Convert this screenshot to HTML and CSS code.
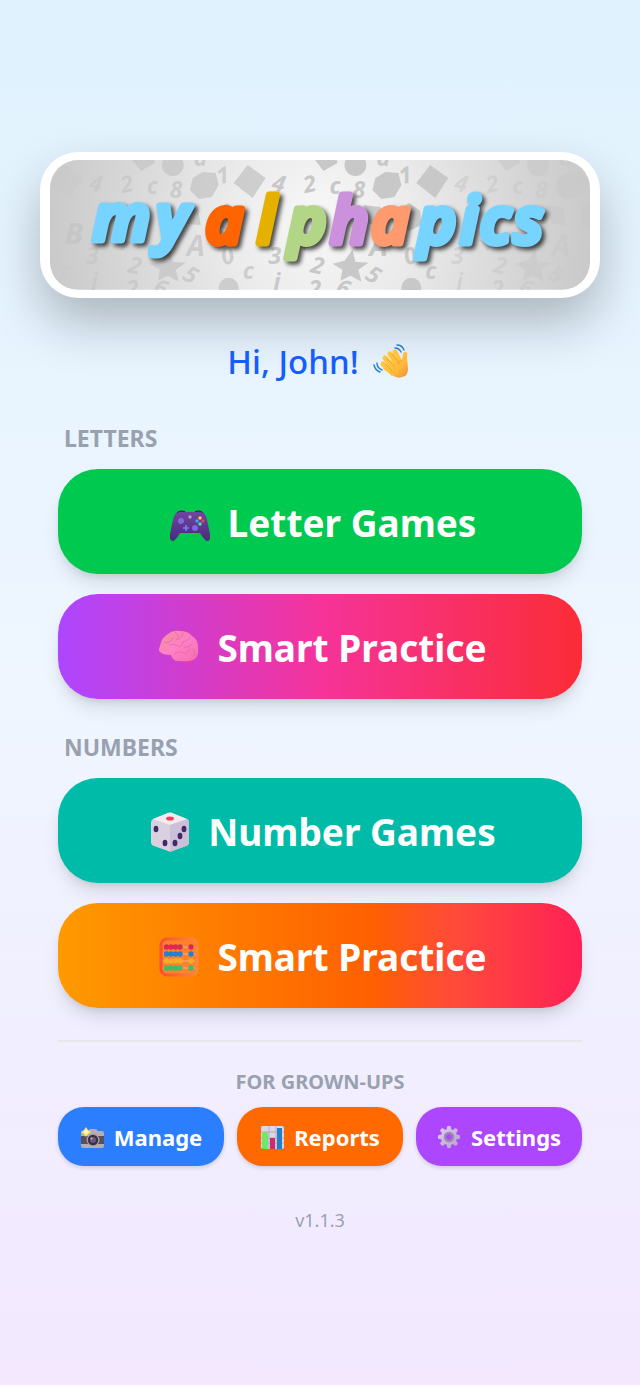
FILE: index.html
```html
<!DOCTYPE html>
<html lang="en">
<head>
<meta charset="utf-8">
<meta name="viewport" content="width=device-width, initial-scale=1">
<title>my alphapics</title>
<link rel="stylesheet" href="styles.css">
</head>
<body>
<main class="home">
  <div class="logo">
    <svg class="logo-art" viewBox="0 0 541 130" role="img" aria-label="my alphapics">
      <defs>
        <radialGradient id="logoBg" cx="270" cy="60" r="270" gradientUnits="userSpaceOnUse">
          <stop offset="0" stop-color="#f8f8f8"/><stop offset=".35" stop-color="#ebebeb"/><stop offset=".75" stop-color="#d6d6d6"/><stop offset="1" stop-color="#cacaca"/>
        </radialGradient>
        <g id="tile" fill="#c8c8c8" class="doodle">
          <path d="M78-6 91 11 105 3 103-6Z"/><circle cx="123" cy="5" r="11"/>
          <path d="m153 12 13 1 3 12-7 12-13 2-9-9 3-12Z"/><path d="m198 5 18 13-13 20-19-15Z"/>
          <path d="m131 45 17 2 3 18-14-1Z"/><path d="m166 50 11-7 11 8 1 14-12 6-11-7Z"/><path d="m64 80 18 2-10 9Z"/>
          <path d="m120 90 3 12 13 1-10 7 3 12-11-6-10 5 2-11-10-6 12-3Z"/>
          <circle cx="179" cy="128" r="10"/>
          <text x="40" y="32" transform="rotate(12 48 23)">4</text><text x="70" y="32" transform="rotate(-12 78 21)">2</text>
          <text x="97" y="34">c</text><text x="120" y="38">8</text><text x="166" y="23" transform="rotate(-12 174 12)">1</text>
          <text x="144" y="6">a</text><text x="137" y="96" class="doodle-big">A</text><text x="171" y="104" transform="rotate(-18 178 94)">0</text>
          <text x="36" y="104">3</text><text x="79" y="114" transform="rotate(12 87 105)">2</text>
          <text x="135" y="124" transform="rotate(30 143 115)">5</text><text x="193" y="119">c</text><text x="41" y="130">i</text>
          <text x="105" y="137" transform="rotate(20 113 127)">6</text><text x="76" y="137">2</text>
        </g>
      </defs>
      <rect width="541" height="130" fill="url(#logoBg)"/>
      <g opacity=".4"><use href="#tile" x="-183"/></g>
      <g opacity=".85"><use href="#tile"/></g>
      <use href="#tile" x="183"/>
      <g opacity=".6"><use href="#tile" x="366"/></g>
      <text x="15" y="84" class="doodle doodle-big" fill="#c6c6c6">B</text>
      <g class="wordmark">
        <text y="80" class="sky"><tspan x="43">m</tspan><tspan x="107">y</tspan></text>
        <text y="83"><tspan x="156" class="orange">a</tspan><tspan x="208" class="gold">l</tspan><tspan x="239" class="green">p</tspan><tspan x="281" class="violet">h</tspan><tspan x="322" class="peach">a</tspan><tspan x="369" class="sky">p</tspan><tspan x="411" class="sky">i</tspan><tspan x="431" class="sky">c</tspan><tspan x="465" class="sky">s</tspan></text>
      </g>
    </svg>
  </div>

  <h1 class="greeting">Hi, John!
    <svg class="wave" viewBox="0 0 36 36" aria-hidden="true">
      <defs><linearGradient id="skin" x1="0" y1="0" x2="1" y2="1"><stop stop-color="#ffcf3f"/><stop offset=".65" stop-color="#ffb83a"/><stop offset="1" stop-color="#ef8b3c"/></linearGradient></defs>
      <g stroke="#ffc43c" stroke-width="5" stroke-linecap="round"><path d="m17 10 9 12M12 14l9 10M10 20l9 9M22 8l6 12"/></g>
      <path fill="url(#skin)" d="M15 18 25 13l4 3 1-6q1-3 3-2 2 1 1 5l1 12q0 7-6 8-5 2-10-2l-9-6Z"/>
      <path fill="none" stroke="#e79b2e" stroke-width=".7" d="m19 10 7 9M14 15l8 8M12 20l7 7M29 16q-4 1-4 5"/>
      <path fill="none" stroke="#267fc5" stroke-width="1.4" stroke-linecap="round" d="M22 4q4 0 6 4M24 1q5 0 7 5M4 19q0 5 5 7M1 21q1 5 6 7"/>
    </svg>
  </h1>

  <section class="group">
    <h2 class="label">LETTERS</h2>
    <button class="big green-btn" type="button">
      <svg class="icon" viewBox="0 0 40 40" aria-hidden="true">
        <defs><linearGradient id="pad" x1="0" y1="0" x2="0" y2="1"><stop stop-color="#71459f"/><stop offset="1" stop-color="#482b7c"/></linearGradient></defs>
        <path fill="#34264d" d="M6 11q2-5 9-3v4H6ZM25 8q7-2 9 3v2h-9Z"/>
        <path fill="url(#pad)" d="M7 10q3-2 7-1h12q4-1 7 1 3 1 4 7l3 14q1 7-3 7-2 0-7-8H10q-5 8-7 8-4 0-3-7l3-14q1-6 4-7Z"/>
        <circle cx="11" cy="18" r="3" fill="#7d69dc"/><circle cx="25" cy="25" r="3" fill="#7d69dc"/><path d="M16 22v6m-3-3h6" stroke="#8a78f5" stroke-width="1.6"/><circle cx="20" cy="14" r="1.7" fill="#b7a0bd"/>
        <circle cx="30" cy="15" r="1.7" fill="#ffc85d"/><circle cx="33" cy="18" r="1.7" fill="#f43d5c"/><circle cx="30" cy="21" r="1.7" fill="#54dfac"/><circle cx="27" cy="18" r="1.7" fill="#38a9ef"/>
      </svg>
      <span>Letter Games</span>
    </button>
    <button class="big pink-btn" type="button">
      <svg class="icon" viewBox="0 0 40 40" aria-hidden="true">
        <defs><linearGradient id="brain" x1="0" y1="0" x2="1" y2="1"><stop stop-color="#f0949d"/><stop offset=".5" stop-color="#ff80c5"/><stop offset="1" stop-color="#f26fb0"/></linearGradient></defs>
        <path fill="#ec3d9c" d="m25 31 2 3q3 4 4 2l2-7Z"/>
        <path fill="url(#brain)" d="M1 18Q3 9 9 6q5-4 12-3 8 0 12 5 7 4 6 13 1 8-5 11-5 2-15 1-5 0-7-6-8 0-11-3-2-2 0-6Z"/>
        <path fill="none" stroke="#e868a8" stroke-width=".9" stroke-linecap="round" d="M5 14q5 3 9-4M16 4q4 2 3 6m5-5q-1 6-7 7m-6 5q5-2 9 2 4-1 4-5m7-5q-1 4-7 5m9 2q-3 4-8 3m-10 8q4-5 10-2 5 0 6-4m3 0q3 3 1 7"/>
      </svg>
      <span>Smart Practice</span>
    </button>
  </section>

  <section class="group">
    <h2 class="label">NUMBERS</h2>
    <button class="big teal-btn" type="button">
      <svg class="icon" viewBox="0 0 40 40" aria-hidden="true">
        <path d="M3 7 18 1q2-1 4 0l15 6q2 1 2 4v19q0 3-3 4l-14 5q-2 1-4 0L4 34q-3-1-3-4V11q0-3 2-4Z" fill="#d9d1e0"/>
        <path d="m3 7 15-6q2-1 4 0l15 6-17 6Z" fill="#f1ebef"/><path d="m20 13 18-6 1 4v19q0 3-3 4l-16 6Z" fill="#cbc0d7"/>
        <ellipse cx="20" cy="6.500" rx="4" ry="2" fill="#f0405f"/>
        <g fill="#402966"><ellipse cx="6" cy="17" rx="2.400" ry="3.200"/><ellipse cx="15" cy="31" rx="2.400" ry="3.200"/><ellipse cx="34" cy="17" rx="2.400" ry="3.200"/><ellipse cx="30" cy="24" rx="2.400" ry="3.200"/><ellipse cx="25" cy="31" rx="2.400" ry="3.200"/></g>
      </svg>
      <span>Number Games</span>
    </button>
    <button class="big orange-btn" type="button">
      <svg class="icon" viewBox="0 0 40 40" aria-hidden="true">
        <defs><linearGradient id="frame"><stop stop-color="#f75231"/><stop offset="1" stop-color="#ff873e"/></linearGradient></defs>
        <rect x="2" y="2" width="36" height="36" rx="6" fill="#ff8128" stroke="url(#frame)" stroke-width="3"/>
        <path stroke="#e8b3a0" stroke-width="1.200" d="M4 10h32M4 17h32M4 24h32M4 31h32"/>
        <g fill="#dc2855"><circle cx="7.500" cy="10" r="2.700"/><circle cx="12" cy="10" r="2.700"/><circle cx="16.500" cy="10" r="2.700"/><circle cx="21" cy="10" r="2.700"/><circle cx="32" cy="10" r="2.700"/></g>
        <g fill="#287fcd"><circle cx="7.500" cy="17" r="2.700"/><circle cx="12" cy="17" r="2.700"/><circle cx="16.500" cy="17" r="2.700"/><circle cx="21" cy="17" r="2.700"/><circle cx="32" cy="17" r="2.700"/></g>
        <g fill="#f8aa29"><circle cx="7.500" cy="24" r="2.700"/><circle cx="12" cy="24" r="2.700"/><circle cx="16.500" cy="24" r="2.700"/><circle cx="21" cy="24" r="2.700"/><circle cx="32" cy="24" r="2.700"/></g>
        <g fill="#3dbd66"><circle cx="7.500" cy="31" r="2.700"/><circle cx="12" cy="31" r="2.700"/><circle cx="16.500" cy="31" r="2.700"/><circle cx="21" cy="31" r="2.700"/><circle cx="32" cy="31" r="2.700"/></g>
      </svg>
      <span>Smart Practice</span>
    </button>
  </section>

  <section class="adults">
    <h2 class="label small-label">FOR GROWN-UPS</h2>
    <div class="tools">
      <button class="tool blue-btn" type="button">
        <svg class="tool-icon" viewBox="0 0 24 24" aria-hidden="true">
          <path fill="#b5adb5" d="M1 8q0-2 2-2h5l2-2h6l2 2h4q2 0 2 2v4H1Z"/><path fill="#57505a" d="M1 11h23v8H1Z"/><path fill="#b4abb3" d="M1 19h23v2q0 2-2 2H3q-2 0-2-2Z"/>
          <circle cx="13" cy="15" r="6.500" fill="#aaa0aa"/><circle cx="13" cy="15" r="5.200" fill="#392e46"/><circle cx="13" cy="15" r="3" fill="#6c5976"/><circle cx="11.500" cy="13.500" r="1" fill="#c9bbcf"/>
          <path fill="#ffe36b" d="m6 2 2 3 3 2-3 2-2 3-2-3-3-2 3-2Z"/><circle cx="6" cy="7" r="2" fill="#fff7bd"/>
        </svg>
        <span>Manage</span>
      </button>
      <button class="tool report-btn" type="button">
        <svg class="tool-icon" viewBox="0 0 24 24" aria-hidden="true">
          <rect x="1" y="1" width="23" height="23" rx="2" fill="#ded5e3"/><path d="M1 7h23M1 13h23M1 18h23M9 1v23M16 1v23" stroke="#b7aac3"/>
          <path fill="#72e56b" d="M2 7h6v17H2Z"/><path fill="#ce2b69" d="M10 13h5v11h-5Z"/><path fill="#247fc8" d="M17 3h5v21h-5Z"/>
        </svg>
        <span>Reports</span>
      </button>
      <button class="tool purple-btn" type="button">
        <svg class="tool-icon" viewBox="0 0 24 24" aria-hidden="true">
          <defs><linearGradient id="gear" gradientUnits="userSpaceOnUse" x1="2" y1="2" x2="22" y2="22"><stop stop-color="#ddd0e7"/><stop offset="1" stop-color="#b6a2c9"/></linearGradient></defs>
          <g stroke="url(#gear)" stroke-width="4.400" stroke-linecap="round"><path d="M12 3v18M3 12h18M5.500 5.500l13 13M18.500 5.500l-13 13"/></g>
          <circle cx="12" cy="12" r="8" fill="url(#gear)"/><circle cx="12" cy="12" r="4" fill="#ad46ff" stroke="#9c88b5" stroke-width="2.500"/>
        </svg>
        <span>Settings</span>
      </button>
    </div>
  </section>
  <p class="version">v1.1.3</p>
</main>
</body>
</html>
```
FILE: styles.css
```css
* { box-sizing: border-box; }

body {
  margin: 0;
  font-family: "Noto Sans", "Open Sans", sans-serif;
  background: linear-gradient(to bottom, #dff2fe, #eff6ff 50%, #f3e8ff);
}

h1, h2, p { margin: 0; }

.home {
  min-height: 100vh;
  display: flex;
  flex-direction: column;
  justify-content: center;
  padding: 0 58px;
}

.logo {
  margin: 0 -18px;
  padding: 8px 10px;
  background: #fff;
  border-radius: 38px;
  box-shadow: 0 25px 50px rgba(0, 0, 0, .25);
}

.logo-art {
  display: block;
  width: 100%;
  border-radius: 28px;
}

.doodle {
  font: italic 700 23px "Open Sans", sans-serif;
}

.doodle-big { font-size: 29px; }

.wordmark {
  font: italic 600 64px "Open Sans", sans-serif;
  stroke-width: 7px;
  stroke-linejoin: round;
  filter: drop-shadow(3px 3px 2px rgba(0, 0, 0, .7));
}

.sky { fill: #77d3ff; stroke: #77d3ff; }
.orange { fill: #ff6400; stroke: #ff6400; }
.gold { fill: #e5b000; stroke: #e5b000; }
.green { fill: #b3d586; stroke: #b3d586; }
.violet { fill: #cb91dc; stroke: #cb91dc; }
.peach { fill: #ff9a6e; stroke: #ff9a6e; }

.greeting {
  display: flex;
  align-items: center;
  justify-content: center;
  gap: 14px;
  margin: 40px 0 36px;
  padding-right: 4px;
  color: #155dfc;
  font-size: 33px;
  font-weight: 500;
  line-height: 48px;
}

.wave { width: 36px; height: 36px; }

.group {
  display: flex;
  flex-direction: column;
  gap: 20px;
  margin-bottom: 32px;
}

.label {
  margin: 0 6px -5px;
  color: #99a1af;
  font-size: 23px;
  font-weight: 700;
  line-height: 32px;
}

.big, .tool {
  display: flex;
  align-items: center;
  justify-content: center;
  border: 0;
  color: #fff;
  font-family: inherit;
  font-weight: 700;
  white-space: nowrap;
  cursor: pointer;
}

.big {
  gap: 18px;
  padding: 26px 24px 23px 30px;
  border-radius: 40px;
  font-size: 37px;
  line-height: 56px;
  box-shadow: 0 12px 20px -4px rgba(0, 0, 0, .12), 0 5px 8px -4px rgba(0, 0, 0, .12);
}

.icon { width: 40px; height: 40px; flex: none; }

.green-btn { background: #00c950; }
.pink-btn { background: linear-gradient(to right, #ad46ff, #f6339a 50%, #fb2c36); }
.teal-btn { background: #00bba7; }
.orange-btn { background: linear-gradient(to right, #fe9a00, #ff6000 60%, #ff4a3b 76%, #ff2056); }

.adults {
  padding-top: 24px;
  border-top: 2px solid #e5e7eb;
}

.small-label {
  margin: 0 0 9px;
  font-size: 20px;
  text-align: center;
}

.tools {
  display: grid;
  grid-template-columns: repeat(3, 1fr);
  gap: 13px;
}

.tool {
  gap: 10px;
  padding: 14px 8px 13px;
  border-radius: 26px;
  font-size: 22px;
  line-height: 32px;
  box-shadow: 0 2px 4px rgba(0, 0, 0, .14);
}

.tool-icon { width: 24px; height: 24px; flex: none; }

.blue-btn { background: #2b7fff; }
.report-btn { background: #ff6900; }
.purple-btn { background: #ad46ff; }

.version {
  margin-top: 41px;
  color: #99a1af;
  font-size: 18px;
  line-height: 26px;
  text-align: center;
}
```
